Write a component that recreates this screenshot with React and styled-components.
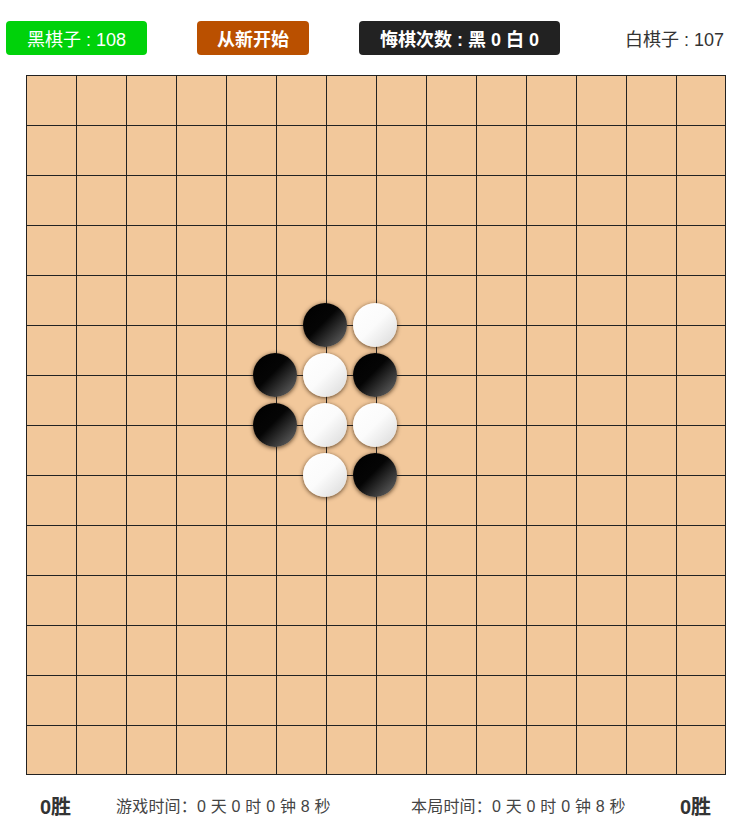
import React from "react";
import styled, { createGlobalStyle } from "styled-components";

const GlobalStyle = createGlobalStyle`
  html, body { margin: 0; padding: 0; background: #fff; }
  body {
    font-family: "Liberation Sans", "Noto Sans CJK SC", Arial, sans-serif;
    color: #333;
  }
`;

const Page = styled.div`
  width: 752px;
  padding-top: 21px;
  box-sizing: border-box;
`;

const TopBar = styled.div`
  display: flex;
  align-items: center;
  height: 34px;
  padding: 0 28px 0 6px;
  gap: 50px;
`;

const colors = {
  green: "#00d20a",
  brown: "#ba5000",
  dark: "#222222",
};

const Pill = styled.div`
  height: 34px;
  display: flex;
  align-items: center;
  padding: 0 ${(p) => p.$pad || 20}px;
  border-radius: 4px;
  background: ${(p) => colors[p.$tone]};
  color: #fff;
  font-size: 18px;
  font-weight: ${(p) => (p.$bold ? 700 : 400)};
  white-space: nowrap;
  cursor: pointer;
`;

const WhiteCount = styled.div`
  margin-left: auto;
  font-size: 18px;
  color: #333;
  white-space: nowrap;
`;

const Board = styled.div`
  position: relative;
  width: 700px;
  height: 700px;
  margin: 20px 0 0 26px;
  box-sizing: border-box;
  background-color: #f2c89b;
  background-image: linear-gradient(to right, #222 1px, transparent 1px),
    linear-gradient(to bottom, #222 1px, transparent 1px);
  background-size: 50px 50px;
  border-right: 1px solid #222;
  border-bottom: 1px solid #222;
`;

const Stone = styled.div`
  position: absolute;
  width: 44px;
  height: 44px;
  border-radius: 50%;
  transform: translate(-22px, -22px);
  background: ${(p) =>
    p.$black
      ? "linear-gradient(135deg, #000 0%, #050505 45%, #6e6e6e 100%)"
      : "linear-gradient(135deg, #fff 0%, #fbfbfb 50%, #d8d8d8 100%)"};
  box-shadow: 0 1px 4px rgba(40, 20, 0, 0.75);
`;

const BottomBar = styled.div`
  display: flex;
  align-items: center;
  height: 30px;
  margin-top: 15px;
  padding-left: 40px;
`;

const Wins = styled.div`
  font-size: 20px;
  font-weight: 700;
  color: #333;
  width: ${(p) => p.$w}px;
  white-space: nowrap;
`;

const Timer = styled.div`
  font-size: 16px;
  color: #444;
  letter-spacing: 0.2px;
  width: ${(p) => p.$w}px;
  white-space: nowrap;
`;

const stones = [
  [6, 5, true],
  [7, 5, false],
  [5, 6, true],
  [6, 6, false],
  [7, 6, true],
  [5, 7, true],
  [6, 7, false],
  [7, 7, false],
  [6, 8, false],
  [7, 8, true],
];

export default function App() {
  return (
    <>
      <GlobalStyle />
      <Page>
        <TopBar>
          <Pill $tone="green" $pad={21}>黑棋子 : 108</Pill>
          <Pill $tone="brown" $bold>从新开始</Pill>
          <Pill $tone="dark" $bold $pad={21}>悔棋次数 : 黑 0 白 0</Pill>
          <WhiteCount>白棋子 : 107</WhiteCount>
        </TopBar>
        <Board>
          {stones.map(([c, r, b], i) => (
            <Stone key={i} $black={b} style={{ left: c * 50 - 1, top: r * 50 }} />
          ))}
        </Board>
        <BottomBar>
          <Wins $w={76}>0胜</Wins>
          <Timer $w={295}>游戏时间：0 天 0 时 0 钟 8 秒</Timer>
          <Timer $w={269}>本局时间：0 天 0 时 0 钟 8 秒</Timer>
          <Wins>0胜</Wins>
        </BottomBar>
      </Page>
    </>
  );
}
